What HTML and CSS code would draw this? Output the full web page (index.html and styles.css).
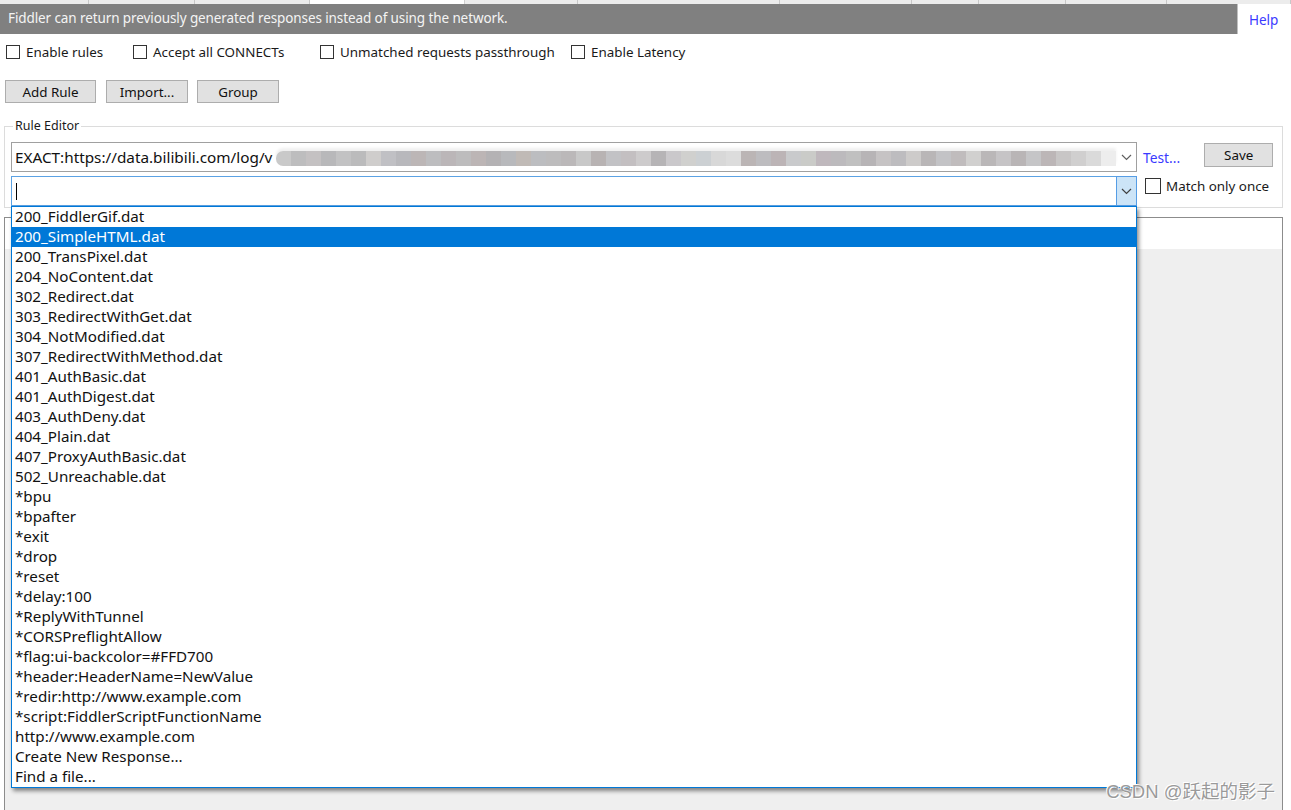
FILE: index.html
```html
<!DOCTYPE html>
<html>
<head>
<meta charset="utf-8">
<link rel="stylesheet" href="styles.css">
</head>
<body>
<div class="tabs">
  <span class="tab t1"></span><span class="tab t2"></span><span class="tab t3"></span><span class="tab gap"></span><span class="tab t4"></span><span class="tab t5"></span><span class="tab t6"></span><span class="tab t7"></span><span class="tab t8"></span><span class="tab t9"></span><span class="tab t10"></span>
</div>
<div class="topbar">
  <div class="banner">Fiddler can return previously generated responses instead of using the network.</div>
  <a class="help">Help</a>
</div>
<div class="checks">
  <label class="chk c1"><span class="box"></span>Enable rules</label>
  <label class="chk c2"><span class="box"></span>Accept all CONNECTs</label>
  <label class="chk c3"><span class="box"></span>Unmatched requests passthrough</label>
  <label class="chk c4"><span class="box"></span>Enable Latency</label>
</div>
<div class="buttons">
  <button class="btn b1">Add Rule</button>
  <button class="btn b2">Import...</button>
  <button class="btn b3">Group</button>
</div>
<div class="group">
  <span class="legend">Rule Editor</span>
  <div class="editor">
    <div class="combo combo1">
      <span class="ctext">EXACT:https://data.bilibili.com/log/v</span>
      <span class="mosaic"></span>
      <span class="arrow"><svg width="11" height="7" viewBox="0 0 11 7"><polyline points="1,1 5.5,5.5 10,1" fill="none" stroke="#606060" stroke-width="1.2"/></svg></span>
    </div>
    <div class="side1">
      <a class="test">Test...</a>
      <button class="btn save">Save</button>
    </div>
    <div class="combo combo2">
      <span class="caret"></span>
      <span class="arrow abtn"><svg width="11" height="7" viewBox="0 0 11 7"><polyline points="1,1 5.5,5.5 10,1" fill="none" stroke="#404040" stroke-width="1.2"/></svg></span>
      <ul class="dropdown">
        <li>200_FiddlerGif.dat</li>
        <li class="sel">200_SimpleHTML.dat</li>
        <li>200_TransPixel.dat</li>
        <li>204_NoContent.dat</li>
        <li>302_Redirect.dat</li>
        <li>303_RedirectWithGet.dat</li>
        <li>304_NotModified.dat</li>
        <li>307_RedirectWithMethod.dat</li>
        <li>401_AuthBasic.dat</li>
        <li>401_AuthDigest.dat</li>
        <li>403_AuthDeny.dat</li>
        <li>404_Plain.dat</li>
        <li>407_ProxyAuthBasic.dat</li>
        <li>502_Unreachable.dat</li>
        <li>*bpu</li>
        <li>*bpafter</li>
        <li>*exit</li>
        <li>*drop</li>
        <li>*reset</li>
        <li>*delay:100</li>
        <li>*ReplyWithTunnel</li>
        <li>*CORSPreflightAllow</li>
        <li>*flag:ui-backcolor=#FFD700</li>
        <li>*header:HeaderName=NewValue</li>
        <li>*redir:http://www.example.com</li>
        <li>*script:FiddlerScriptFunctionName</li>
        <li>http://www.example.com</li>
        <li>Create New Response...</li>
        <li>Find a file...</li>
      </ul>
    </div>
    <label class="chk once"><span class="box box15"></span>Match only once</label>
  </div>
</div>
<div class="panel">
  <div class="phead"></div>
  <div class="pbody"></div>
</div>
<div class="watermark">CSDN @跃起的影子</div>
</body>
</html>
```

FILE: styles.css
```css
* { box-sizing: border-box; }
html, body { margin: 0; padding: 0; }
body {
  width: 1291px;
  height: 810px;
  overflow: hidden;
  background: #fff;
  font-family: "Noto Sans", "Open Sans", sans-serif;
  color: #000;
  position: relative;
}

.tabs {
  height: 4px;
  display: flex;
  background: #e9e9e9;
}
.tab { height: 4px; border-right: 1px solid #c8c8c8; background: #ececec; }
.t1 { width: 89px; }
.t2 { width: 106px; }
.t3 { width: 115px; }
.gap { width: 155px; background: #fff; border-right: 1px solid #d0d0d0; }
.t4 { width: 113px; }
.t5 { width: 202px; }
.t6 { width: 132px; }
.t7 { width: 67px; }
.t8 { width: 87px; }
.t9 { width: 101px; }
.t10 { width: 124px; }

.topbar { display: flex; height: 30px; }
.banner {
  width: 1238px;
  height: 30px;
  background: #808080;
  color: #f4f4f4;
  font-size: 13.5px;
  line-height: 29px;
  padding-left: 8px;
  border-right: 1px solid #c0c0c0;
  letter-spacing: -0.1px;
}
.help {
  color: #3a3aff;
  font-size: 13.5px;
  line-height: 30px;
  padding-left: 11px;
  padding-top: 1px;
}

.checks {
  display: flex;
  margin-top: 11px;
  height: 14px;
  align-items: center;
  padding-left: 6px;
}
.chk {
  display: flex;
  align-items: center;
  font-size: 13.4px;
  color: #1a1a1a;
  white-space: nowrap;
}
.box {
  width: 14px;
  height: 14px;
  border: 1px solid #333;
  background: #fff;
  margin-right: 6px;
  flex: none;
}
.c1 { width: 127px; }
.c2 { width: 187px; }
.c3 { width: 251px; }

.buttons {
  display: flex;
  margin-top: 21px;
  padding-left: 5px;
  gap: 10px;
}
.btn {
  height: 23px;
  background: #e1e1e1;
  border: 1px solid #adadad;
  font-family: inherit;
  font-size: 13.4px;
  color: #111;
  padding: 0;
  margin: 0;
}
.b1 { width: 91px; }
.b2 { width: 82px; margin-left: 0; }
.b3 { width: 82px; margin-left: -1px; }

.group {
  position: relative;
  margin: 23px 8px 0 4px;
  border: 1px solid #dcdcdc;
  padding: 15px 0 0 6px;
  height: 82px;
}
.legend {
  position: absolute;
  top: -9px;
  left: 8px;
  background: #fff;
  padding: 0 2px;
  font-size: 12.5px;
  line-height: 16px;
  color: #1a1a1a;
}
.editor {
  display: grid;
  grid-template-columns: 1126px 1fr;
  grid-template-rows: 30px 30px;
  row-gap: 4px;
  column-gap: 0;
}

.combo {
  position: relative;
  height: 30px;
  border: 1px solid #9a9a9a;
  background: #fff;
  display: flex;
  align-items: center;
}
.combo1 { border-color: #a0a0a0; }
.ctext {
  font-size: 15.3px;
  padding-left: 3px;
  color: #111;
  white-space: nowrap;
}
.mosaic {
  position: absolute;
  left: 264px;
  top: 8px;
  width: 840px;
  height: 15px;
  border-radius: 7px 0 0 7px;
  background: linear-gradient(to right,
    #c9c9c9 0 15px, #bdbdbe 15px 30px, #c4c1c2 30px 45px, #b8b8ba 45px 60px, #c2c2c3 60px 75px, #bbbbbc 75px 90px, #cfcdcc 90px 105px, #c0c0c4 105px 120px,
    #b8b8bc 120px 135px, #bcb6b6 135px 150px, #bdbdbf 150px 165px, #bbb6b8 165px 180px, #bdbcbd 180px 195px, #bcb5b5 195px 210px, #b4b2b4 210px 225px, #b8b9bc 225px 240px,
    #c0bab6 240px 255px, #bcbdc0 255px 270px, #bdbcbd 270px 285px, #bbb8b9 285px 300px, #c8c8c8 300px 315px, #b8b3b3 315px 330px, #c2c2c5 330px 345px, #c3bfc1 345px 360px,
    #cdcbcc 360px 375px, #b6b4b6 375px 390px, #cac8cb 390px 405px, #d0d0ce 405px 420px, #ccd0d3 420px 435px, #d8d8d8 435px 450px, #dcdcdc 450px 465px, #bbb5b5 465px 480px,
    #bdbcbf 480px 495px, #bcb4b6 495px 510px, #c9cacc 510px 525px, #cacbc8 525px 540px, #bfb8bd 540px 555px, #bcbabd 555px 570px, #c0c0c0 570px 585px, #b7b4b6 585px 600px,
    #c6c3c4 600px 615px, #bdbcbf 615px 630px, #cdcbca 630px 645px, #b9b6b7 645px 660px, #c3c3c6 660px 675px, #c0bcbd 675px 690px, #d1d0cf 690px 705px, #bab7b8 705px 720px,
    #c6c4c6 720px 735px, #b9b5b6 735px 750px, #c5c5c7 750px 765px, #bcb6b7 765px 780px, #c8c6c6 780px 795px, #d0cfcf 795px 810px, #dadada 810px 825px, #ededed 825px 840px);
  box-shadow: 0 -3px 3px #f0f0f0;
}
.arrow {
  position: absolute;
  right: 0;
  top: 0;
  width: 20px;
  height: 28px;
  display: flex;
  align-items: center;
  justify-content: center;
}
.combo2 { border-color: #5ba2e4; }
.abtn {
  top: -1px;
  right: -1px;
  height: 30px;
  width: 21px;
  background: #cce4f7;
  border: 1px solid #569de5;
}
.caret {
  width: 1px;
  height: 17px;
  background: #000;
  margin-left: 4px;
}

.side1 {
  display: flex;
  align-items: center;
  padding-left: 6px;
}
.test {
  color: #3a3aff;
  font-size: 13.8px;
  margin-top: 0;
}
.save {
  width: 69px;
  height: 24px;
  margin-left: 24px;
  margin-top: -4px;
}
.once {
  padding-left: 8px;
  align-self: start;
  margin-top: 1px;
}
.box15 { width: 16px; height: 16px; margin-right: 5px; }

.dropdown {
  position: absolute;
  left: -1px;
  top: 29px;
  width: 1126px;
  margin: 0;
  padding: 0;
  list-style: none;
  background: #fff;
  border: 1px solid #0078d7;
  box-shadow: 2px 3px 4px rgba(0, 0, 0, 0.45);
  z-index: 5;
}
.dropdown li {
  height: 20px;
  line-height: 19px;
  font-size: 15.2px;
  padding-left: 3px;
  color: #111;
  white-space: nowrap;
}
.dropdown li.sel {
  background: #0078d7;
  color: #fff;
}

.panel {
  margin: 9px 8px 0 4px;
  border: 1px solid #8c8c8c;
  border-bottom: none;
  height: 600px;
  box-shadow: inset 1px 1px 0 #d0d0d0;
}
.phead { height: 31px; background: #fff; }
.pbody { height: 570px; background: #efefef; }

.watermark {
  position: absolute;
  right: 16px;
  bottom: 7px;
  font-family: "Liberation Sans", "Noto Sans CJK SC", sans-serif;
  font-size: 18.5px;
  color: #9a9a9a;
  text-shadow: 1px 1px 0 #fff, -1px -1px 0 #fff;
  z-index: 10;
}
```
